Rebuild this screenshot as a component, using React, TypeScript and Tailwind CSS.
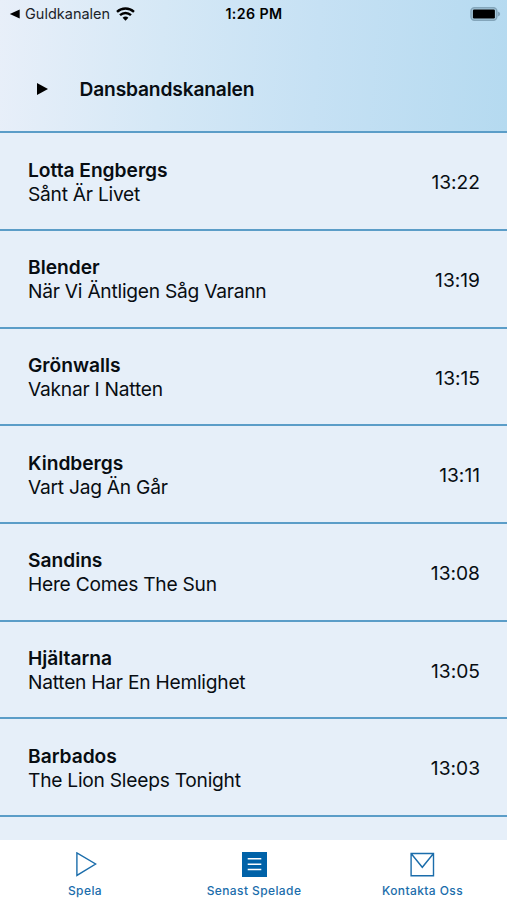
interface Song {
  artist: string;
  title: string;
  time: string;
}

const songs: Song[] = [
  { artist: "Lotta Engbergs", title: "Sånt Är Livet", time: "13:22" },
  { artist: "Blender", title: "När Vi Äntligen Såg Varann", time: "13:19" },
  { artist: "Grönwalls", title: "Vaknar I Natten", time: "13:15" },
  { artist: "Kindbergs", title: "Vart Jag Än Går", time: "13:11" },
  { artist: "Sandins", title: "Here Comes The Sun", time: "13:08" },
  { artist: "Hjältarna", title: "Natten Har En Hemlighet", time: "13:05" },
  { artist: "Barbados", title: "The Lion Sleeps Tonight", time: "13:03" },
];

function WifiIcon() {
  return (
    <svg width="19" height="14" viewBox="0 0 19 14" fill="none" stroke="#000" strokeWidth="2.4">
      <path d="M1 4.9C5.9 .4 13.1 .4 18 4.9" />
      <path d="M4 8.2C7.2 5.2 11.8 5.2 15 8.2" />
      <path d="M6.6 10.8C8.3 9.2 10.7 9.2 12.4 10.8L9.5 13.7Z" fill="#000" stroke="none" />
    </svg>
  );
}

function BatteryIcon() {
  return (
    <svg width="31" height="14" viewBox="0 0 31 14">
      <rect x="1" y=".8" width="25.8" height="12.4" rx="3.4" fill="#a9cbde" stroke="#83a5ba" strokeWidth="1.5" />
      <rect x="2.9" y="2.6" width="22" height="8.8" rx="1.2" fill="#000" />
      <path d="M27.8 4.5C30.9 5.6 30.9 8.4 27.8 9.5Z" fill="#83a5ba" />
    </svg>
  );
}

function StatusBar() {
  return (
    <div className="grid h-7 grid-cols-3 items-center pl-[9px] pr-[6px] text-black">
      <div className="flex items-center">
        <svg width="11" height="10" viewBox="0 0 11 10">
          <path d="M10.7 .4V9.4L.8 4.9Z" fill="#000" />
        </svg>
        <span className="ml-[5px] w-[91px] whitespace-nowrap text-[14.5px] text-[#1c2328]">Guldkanalen</span>
        <WifiIcon />
      </div>
      <span className="-ml-0.5 text-center text-[14.2px] font-semibold tracking-[0.4px]">1:26 PM</span>
      <div className="flex justify-end">
        <BatteryIcon />
      </div>
    </div>
  );
}

function SongRow({ song }: { song: Song }) {
  return (
    <li className="flex h-[97.7px] items-center justify-between border-b-2 border-[#5b9dc8] pl-7 pr-[27px] pt-[3px]">
      <div className="text-[19.2px] leading-[23.8px]">
        <div className="font-semibold tracking-[-0.02px]">{song.artist}</div>
        <div className="tracking-[-0.25px]">{song.title}</div>
      </div>
      <span className="text-[19.2px] [font-feature-settings:'calt'_0]">{song.time}</span>
    </li>
  );
}

function TabBar() {
  return (
    <nav className="grid h-[60px] shrink-0 grid-cols-3 bg-white text-[12px] font-medium tracking-[0.4px] text-[#1b6dab]">
      <div className="flex flex-col items-center pl-px pt-3">
        <svg width="25" height="25" viewBox="0 0 25 25" fill="none" stroke="currentColor" strokeWidth="1.4">
          <path d="M3.9 .9V23.4L22.6 12Z" />
        </svg>
        <span className="mt-1.5 leading-4">Spela</span>
      </div>
      <div className="flex flex-col items-center pl-px pt-3">
        <svg width="25" height="25" viewBox="0 0 25 25">
          <path d="M0 0H25V25H0Z" fill="#0062a8" />
          <path d="M5.7 6.7H19.3M5.7 12.2H19.3M5.7 17.4H19.3" stroke="#fff" strokeWidth="1.5" />
        </svg>
        <span className="mt-1.5 leading-4">Senast Spelade</span>
      </div>
      <div className="flex flex-col items-center pt-3">
        <svg width="25" height="25" viewBox="0 0 25 25" fill="none" stroke="currentColor" strokeWidth="1.4">
          <path d="M1.1 1.5H23.5V23.8H1.1ZM1.1 1.5L12.3 15.3L23.5 1.5" />
        </svg>
        <span className="mt-1.5 leading-4">Kontakta Oss</span>
      </div>
    </nav>
  );
}

export default function App() {
  return (
    <div className="flex h-[900px] w-[507px] flex-col overflow-hidden bg-[#e6eff9] font-['Inter',sans-serif] text-[#080d12]">
      <header className="h-[133.2px] shrink-0 border-b-2 border-[#5b9dc8] bg-[linear-gradient(94deg,#e8eff9_0%,#d5e8f6_32%,#c6e1f4_62%,#b5daf0_100%)]">
        <StatusBar />
        <div className="flex items-center pl-[37px] pt-[49px]">
          <svg width="11" height="12" viewBox="0 0 11 12">
            <path d="M0 0L11 6L0 12Z" fill="#000" />
          </svg>
          <h1 className="ml-[31.5px] text-[19.2px] font-semibold leading-6 tracking-[-0.16px]">Dansbandskanalen</h1>
        </div>
      </header>
      <ul className="min-h-0 flex-1">
        {songs.map((song) => (
          <SongRow key={song.time} song={song} />
        ))}
      </ul>
      <TabBar />
    </div>
  );
}
